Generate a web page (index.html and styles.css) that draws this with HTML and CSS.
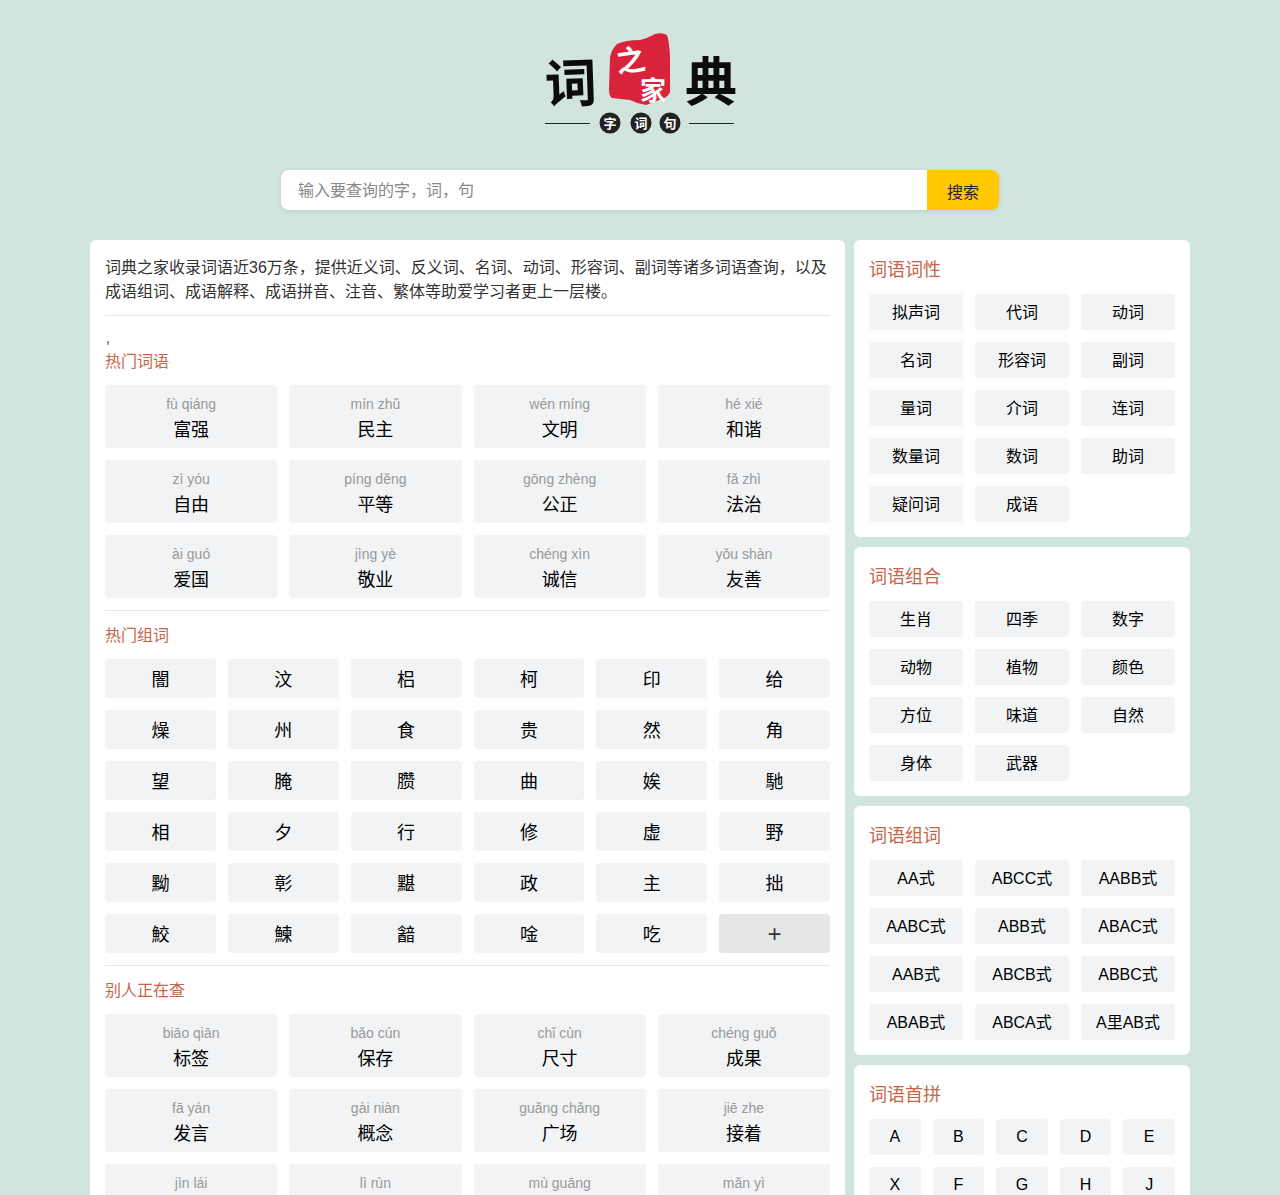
FILE: index.html
```html
<!DOCTYPE html>
<html lang="zh">
<head>
<meta charset="utf-8">
<title>词典之家</title>
<link rel="stylesheet" href="styles.css">
</head>
<body>
<div class="page">
<header class="logo-wrap">
<svg class="logo" viewBox="0 0 220 125" width="220" height="125" role="img" aria-label="词之家典">
<path class="seal" d="M80 38 Q81 30 87 24 Q96 20 110 20 Q118 18 125 14 Q132 12 137 15 Q140 25 140 40 L140 72 Q138 77 132 79 L116 85 Q108 84 100 80 L82 78 Q79 76 79 70 Z"/>
<text class="brush" x="15" y="82" transform="rotate(-2 41 65)">词</text>
<text class="brush" x="155" y="81">典</text>
<text class="seal-text big" x="86" y="51" transform="rotate(-8 99 40)">之</text>
<text class="seal-text small" x="110" y="80">家</text>
<rect class="rule" x="15" y="103" width="45" height="1"/>
<rect class="rule" x="159" y="103" width="45" height="1"/>
<circle class="dot" cx="80" cy="103" r="10.5"/>
<circle class="dot" cx="111" cy="103" r="10.5"/>
<circle class="dot" cx="140" cy="103" r="10.5"/>
<text class="dot-text" x="80" y="108">字</text>
<text class="dot-text" x="111" y="108">词</text>
<text class="dot-text" x="140" y="108">句</text>
</svg>
</header>
<form class="search">
<input class="search-input" type="text" placeholder="输入要查询的字，词，句">
<button class="search-btn" type="button">搜索</button>
</form>
<div class="layout">
<main class="main card">
<p class="intro">词典之家收录词语近36万条，提供近义词、反义词、名词、动词、形容词、副词等诸多词语查询，以及成语组词、成语解释、成语拼音、注音、繁体等助爱学习者更上一层楼。</p>
<section class="section first">
<div class="stray">,</div>
<h2 class="title">热门词语</h2>
<div class="words">
<a class="word"><span class="py">fù qiáng</span><span class="hz">富强</span></a>
<a class="word"><span class="py">mín zhǔ</span><span class="hz">民主</span></a>
<a class="word"><span class="py">wén míng</span><span class="hz">文明</span></a>
<a class="word"><span class="py">hé xié</span><span class="hz">和谐</span></a>
<a class="word"><span class="py">zì yóu</span><span class="hz">自由</span></a>
<a class="word"><span class="py">píng děng</span><span class="hz">平等</span></a>
<a class="word"><span class="py">gōng zhèng</span><span class="hz">公正</span></a>
<a class="word"><span class="py">fǎ zhì</span><span class="hz">法治</span></a>
<a class="word"><span class="py">ài guó</span><span class="hz">爱国</span></a>
<a class="word"><span class="py">jìng yè</span><span class="hz">敬业</span></a>
<a class="word"><span class="py">chéng xìn</span><span class="hz">诚信</span></a>
<a class="word"><span class="py">yǒu shàn</span><span class="hz">友善</span></a>
</div>
</section>
<section class="section">
<h2 class="title">热门组词</h2>
<div class="chars">
<a class="char">闇</a><a class="char">汶</a><a class="char">梠</a><a class="char">柯</a><a class="char">印</a><a class="char">给</a>
<a class="char">燥</a><a class="char">州</a><a class="char">食</a><a class="char">贵</a><a class="char">然</a><a class="char">角</a>
<a class="char">望</a><a class="char">腌</a><a class="char">臜</a><a class="char">曲</a><a class="char">娭</a><a class="char">馳</a>
<a class="char">相</a><a class="char">夕</a><a class="char">行</a><a class="char">修</a><a class="char">虚</a><a class="char">野</a>
<a class="char">黝</a><a class="char">彰</a><a class="char">黮</a><a class="char">政</a><a class="char">主</a><a class="char">拙</a>
<a class="char">鮫</a><a class="char">鰊</a><a class="char">韽</a><a class="char">唫</a><a class="char">吃</a><a class="char more">+</a>
</div>
</section>
<section class="section">
<h2 class="title">别人正在查</h2>
<div class="words">
<a class="word"><span class="py">biāo qiān</span><span class="hz">标签</span></a>
<a class="word"><span class="py">bǎo cún</span><span class="hz">保存</span></a>
<a class="word"><span class="py">chǐ cùn</span><span class="hz">尺寸</span></a>
<a class="word"><span class="py">chéng guǒ</span><span class="hz">成果</span></a>
<a class="word"><span class="py">fā yán</span><span class="hz">发言</span></a>
<a class="word"><span class="py">gài niàn</span><span class="hz">概念</span></a>
<a class="word"><span class="py">guǎng chǎng</span><span class="hz">广场</span></a>
<a class="word"><span class="py">jiē zhe</span><span class="hz">接着</span></a>
<a class="word"><span class="py">jìn lái</span></a>
<a class="word"><span class="py">lì rùn</span></a>
<a class="word"><span class="py">mù guāng</span></a>
<a class="word"><span class="py">mǎn yì</span></a>
</div>
</section>
</main>
<aside class="side">
<section class="card panel">
<h2 class="panel-title">词语词性</h2>
<div class="tags">
<a class="tag">拟声词</a><a class="tag">代词</a><a class="tag">动词</a>
<a class="tag">名词</a><a class="tag">形容词</a><a class="tag">副词</a>
<a class="tag">量词</a><a class="tag">介词</a><a class="tag">连词</a>
<a class="tag">数量词</a><a class="tag">数词</a><a class="tag">助词</a>
<a class="tag">疑问词</a><a class="tag">成语</a>
</div>
</section>
<section class="card panel">
<h2 class="panel-title">词语组合</h2>
<div class="tags">
<a class="tag">生肖</a><a class="tag">四季</a><a class="tag">数字</a>
<a class="tag">动物</a><a class="tag">植物</a><a class="tag">颜色</a>
<a class="tag">方位</a><a class="tag">味道</a><a class="tag">自然</a>
<a class="tag">身体</a><a class="tag">武器</a>
</div>
</section>
<section class="card panel">
<h2 class="panel-title">词语组词</h2>
<div class="tags">
<a class="tag">AA式</a><a class="tag">ABCC式</a><a class="tag">AABB式</a>
<a class="tag">AABC式</a><a class="tag">ABB式</a><a class="tag">ABAC式</a>
<a class="tag">AAB式</a><a class="tag">ABCB式</a><a class="tag">ABBC式</a>
<a class="tag">ABAB式</a><a class="tag">ABCA式</a><a class="tag">A里AB式</a>
</div>
</section>
<section class="card panel">
<h2 class="panel-title">词语首拼</h2>
<div class="tags letters">
<a class="tag">A</a><a class="tag">B</a><a class="tag">C</a><a class="tag">D</a><a class="tag">E</a>
<a class="tag">X</a><a class="tag">F</a><a class="tag">G</a><a class="tag">H</a><a class="tag">J</a>
</div>
</section>
</aside>
</div>
</div>
</body>
</html>
```
FILE: styles.css
```css
* { box-sizing: border-box; }
html, body { margin: 0; padding: 0; height: 1195px; overflow: hidden; }
body {
  background: #d1e4de;
  color: #333;
  font-family: "Liberation Sans", "Noto Sans CJK SC", sans-serif;
  font-size: 16px;
}
.page { width: 1100px; margin: 0 auto; height: 1195px; overflow: hidden; }
.logo-wrap { display: flex; justify-content: center; align-items: flex-start; padding-top: 20px; height: 170px; }
.logo { display: block; }
.seal { fill: #d9233a; }
.brush { font-family: "Noto Sans CJK SC", sans-serif; font-weight: 700; font-size: 52px; fill: #0c0c0c; }
.seal-text { font-family: "Noto Sans CJK SC", sans-serif; font-weight: 700; fill: #fff; }
.seal-text.big { font-size: 29px; }
.seal-text.small { font-size: 26px; }
.rule { fill: #222; }
.dot { fill: #222; }
.dot-text { font-family: "Noto Sans CJK SC", sans-serif; font-weight: 700; font-size: 13px; fill: #fff; text-anchor: middle; }
.search {
  display: flex;
  width: 718px;
  height: 40px;
  margin: 0 auto 30px;
  border-radius: 8px;
  overflow: hidden;
  box-shadow: 0 1px 4px rgba(0, 0, 0, .1);
}
.search-input {
  flex: 1;
  min-width: 0;
  border: 0;
  outline: 0;
  padding: 2px 17px 0;
  background: #fff;
  font: inherit;
  color: #333;
}
.search-input::placeholder { color: #888; opacity: 1; }
.search-btn {
  width: 72px;
  border: 0;
  padding: 2px 0 0;
  background: #ffc800;
  color: #222;
  font: inherit;
}
.layout { display: flex; justify-content: space-between; align-items: flex-start; }
.card { background: #fff; border-radius: 6px; }
.main { width: 755px; padding: 15px; }
.intro { margin: 0; padding: 1px 0 11px; line-height: 24px; color: #333; }
.section { padding: 12px 0; border-top: 1px solid #e6e8e8; }
.stray { height: 21px; font-size: 14px; line-height: 21px; color: #333; padding-left: 1px; }
.title { margin: 0 0 10px; font-size: 16px; line-height: 26px; font-weight: 400; color: #c5664a; }
.words { display: grid; grid-template-columns: repeat(4, 1fr); gap: 12px; }
.word {
  display: flex;
  flex-direction: column;
  align-items: center;
  height: 63px;
  padding-top: 9px;
  background: #f1f3f5;
  border-radius: 4px;
}
.py { font-size: 14px; line-height: 20px; color: #999; }
.hz { font-size: 18px; line-height: 28px; margin-top: 2px; color: #000; }
.chars { display: grid; grid-template-columns: repeat(6, 1fr); gap: 12px; }
.char {
  display: flex;
  align-items: center;
  justify-content: center;
  height: 39px;
  padding-bottom: 2px;
  background: #f1f3f5;
  border-radius: 4px;
  font-size: 18px;
  color: #000;
}
.char.more { background: #e4e7e4; color: #333; font-size: 24px; padding-bottom: 0; }
.side { width: 336px; display: flex; flex-direction: column; gap: 10px; }
.panel { padding: 15px; }
.panel-title { margin: 0 0 8px; font-size: 18px; line-height: 31px; font-weight: 400; color: #c5664a; }
.tags { display: grid; grid-template-columns: repeat(3, 1fr); gap: 12px; }
.tags.letters { grid-template-columns: repeat(5, 1fr); }
.tag {
  display: flex;
  align-items: center;
  justify-content: center;
  height: 36px;
  padding-bottom: 2px;
  background: #f1f3f5;
  border-radius: 4px;
  font-size: 16px;
  color: #000;
}
.letters .tag { padding-bottom: 0; }
```
